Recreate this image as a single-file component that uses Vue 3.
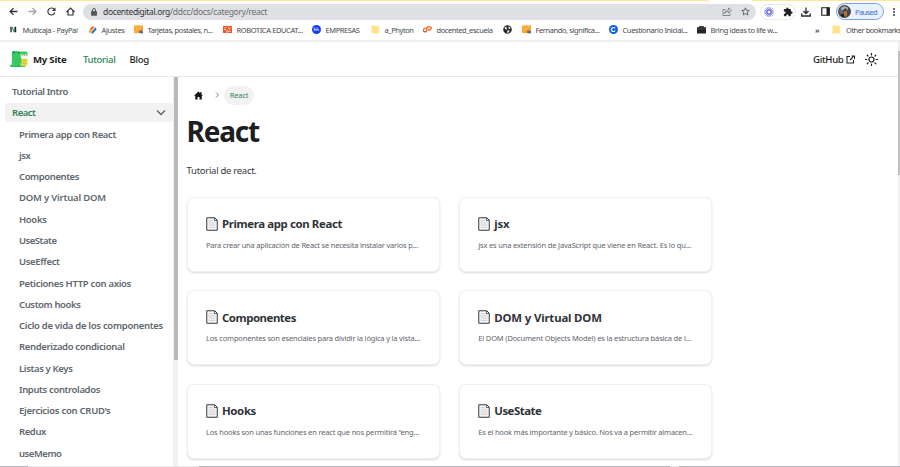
<script setup>
// Tunes the tracking of a label so that it takes the given width.
const vFit = {
  mounted(el, { value }) {
    const natural = el.getBoundingClientRect().width
    el.style.letterSpacing = (value - natural) / el.textContent.length + 'px'
  },
}

const bookmarks = [
  { icon: 'n', label: 'Multicaja - PayPal', text: 55, slot: 79 },
  { icon: 'pen', label: 'Ajustes', text: 23, slot: 46 },
  { icon: 'card', label: 'Tarjetas, postales, n...', text: 65, slot: 89 },
  { icon: 'robot', label: 'ROBOTICA EDUCAT...', text: 66, slot: 89 },
  { icon: 'wave', label: 'EMPRESAS', text: 34, slot: 59 },
  { icon: 'folder', label: 'a_Phyton', text: 29, slot: 52 },
  { icon: 'cp', label: 'docented_escuela', text: 56, slot: 80 },
  { icon: 'globe', label: '', text: 0, slot: 19 },
  { icon: 'card', label: 'Fernando, significa...', text: 64, slot: 87 },
  { icon: 'c', label: 'Cuestionario Inicial...', text: 65, slot: 88 },
  { icon: 'case', label: 'Bring ideas to life w...', text: 67, slot: 118 },
]

const links = [
  ['Primera app con React', 97],
  ['jsx', 11.5],
  ['Componentes', 60],
  ['DOM y Virtual DOM', 87],
  ['Hooks', 27.5],
  ['UseState', 37.5],
  ['UseEffect', 40.5],
  ['Peticiones HTTP con axios', 112],
  ['Custom hooks', 61.5],
  ['Ciclo de vida de los componentes', 144],
  ['Renderizado condicional', 105.5],
  ['Listas y Keys', 53.5],
  ['Inputs controlados', 81],
  ["Ejercicios con CRUD’s", 91.5],
  ['Redux', 27],
  ['useMemo', 42.5],
]

const cards = [
  { title: 'Primera app con React', tw: 120, desc: 'Para crear una aplicación de React se necesita instalar varios p...', dw: 212 },
  { title: 'jsx', tw: 15, desc: 'jsx es una extensión de JavaScript que viene en React. Es lo qu...', dw: 213 },
  { title: 'Componentes', tw: 74, desc: 'Los componentes son esenciales para dividir la lógica y la vista...', dw: 214 },
  { title: 'DOM y Virtual DOM', tw: 107.5, desc: 'El DOM (Document Objects Model) es la estructura básica de l...', dw: 213 },
  { title: 'Hooks', tw: 34, desc: 'Los hooks son unas funciones en react que nos permitirá “eng...', dw: 213 },
  { title: 'UseState', tw: 47, desc: 'Es el hook más importante y básico. Nos va a permitir almacen...', dw: 214 },
]
</script>

<template>
  <div class="window">
    <div class="tabstrip"><i></i></div>
    <div class="toolbar">
      <div class="nav-icons">
        <svg width="9" height="9" viewBox="0 0 16 16" class="line"><path d="M15 8H2M8 2 2 8l6 6" /></svg>
        <svg width="9" height="9" viewBox="0 0 16 16" class="line dim"><path d="M1 8h13M8 2l6 6-6 6" /></svg>
        <svg width="9" height="9" viewBox="0 0 18 18" class="line"><path d="M15.500 11A7 7 0 1 1 14 4.300L16 7" /><path d="M17 1v7h-7z" fill="#333" stroke="none" /></svg>
        <svg width="9" height="9" viewBox="0 0 18 18" class="line"><path d="M1 10 9 2l8 8M4 8v8h10V8" /></svg>
      </div>
      <div class="address">
        <svg width="6" height="8" viewBox="0 0 12 16"><path d="M3 7V4a3 3 0 0 1 6 0v3" fill="none" stroke="#55585c" stroke-width="2" /><rect y="6" width="12" height="9.500" rx="1.500" fill="#55585c" /></svg>
        <span class="url"><span v-fit="67"><b>docentedigital.org</b></span><span v-fit="97" class="path">/ddcc/docs/category/react</span></span>
        <svg width="10" height="9" viewBox="0 0 20 18" class="thin"><path d="M7 5H2v12h14v-4M5 13c1-5 5-7 8-7V2l6 5-6 5V9q-5 0-8 4z" /></svg>
        <svg width="9" height="9" viewBox="0 0 20 20" class="star"><path d="m10 2 2.400 5.300 5.800.6-4.300 3.900 1.200 5.700-5.100-2.900-5.100 2.900 1.200-5.700L1.800 7.900l5.800-.6z" /></svg>
      </div>
      <div class="extensions">
        <svg width="10" height="10" viewBox="0 0 20 20"><path d="M10 0v20M0 10h20M3 3l14 14M17 3 3 17M6.200.8l7.600 18.400M13.800.8 6.200 19.200M.8 6.200l18.400 7.600M.8 13.800l18.400-7.600" stroke="#625bf0" stroke-width="1.500" /><circle cx="10" cy="10" r="5" fill="#625bf0" /><circle cx="10" cy="10" r="3" fill="#fff" /></svg>
        <svg width="10" height="10" viewBox="0 0 24 24"><path fill="#202124" d="M20.500 11H19V7a2 2 0 0 0-2-2h-4V3.500a2.500 2.500 0 0 0-5 0V5H4a2 2 0 0 0-2 2v3.800h1.500a2.700 2.700 0 0 1 0 5.400H2V20a2 2 0 0 0 2 2h3.800v-1.500a2.700 2.700 0 0 1 5.400 0V22H17a2 2 0 0 0 2-2v-4h1.500a2.500 2.500 0 0 0 0-5z" /></svg>
      </div>
      <svg class="download" width="10" height="10" viewBox="0 0 20 20"><path d="M10 1v11M5 8l5 5 5-5M1.500 13v5h17v-5" fill="none" stroke="#28292c" stroke-width="2.600" /></svg>
      <svg class="panel" width="9" height="9" viewBox="0 0 18 18"><path d="M1.500 1.500h15v15h-15z" fill="none" stroke="#222" stroke-width="2.400" /><path d="M11 1h6v16h-6z" fill="#222" /></svg>
      <div class="profile">
        <svg width="13" height="13" viewBox="0 0 14 14"><circle cx="7" cy="7" r="7" fill="#484545" /><path d="M3 3 7 1l4 2-1 3-4-1-3 2z" fill="#a9adb3" /><path d="M1 5.500 5 5l1 4-4 1z" fill="#656b79" /><path d="M7 4.500 9 6l1 4-1 3-3-1z" fill="#b17038" /><circle cx="8" cy="5" r="1.300" fill="#252326" /><path d="M3 10h3l1 3-3-.5z" fill="#18191e" /></svg>
        <span v-fit="22">Paused</span>
      </div>
      <div class="dots"><i></i><i></i><i></i></div>
    </div>

    <div class="bookmarks">
      <div v-for="(b, i) in bookmarks" :key="i" class="bookmark" :style="{ width: b.slot + 'px' }">
        <svg width="9" height="9" viewBox="0 0 20 20">
          <g v-if="b.icon === 'n'"><path d="M3 16V4l3 0v12z" fill="#222" /><path d="M5 4h3l5 12h-3z" fill="#25a95d" /><path d="M12 4h4v12h-4z" fill="#222" /></g>
          <g v-else-if="b.icon === 'pen'"><path d="M3 9 11 2l4 3-8 8z" fill="#f37532" /><path d="m2 13 4-3 3 3-4 4-3 1z" fill="#fba61b" /><path d="m8 15 9-10 2 5-8 9H7z" fill="#2679bd" /></g>
          <g v-else-if="b.icon === 'card'"><path d="M0 1h20v17H0z" fill="#f6a530" /><path d="m2 3 7 7 8-7M1 16l7-7" fill="none" stroke="#ffc95a" stroke-width="2" /><path d="M11 12h6v6h-6z" fill="#dd5546" /><circle cx="17" cy="16" r="3" fill="#35749b" /></g>
          <g v-else-if="b.icon === 'robot'"><path d="M0 2h20v16H10V11H8v7H0z" fill="#ef5327" /><path d="M2 6h6M2 10h5M12 5l2 5 4-5M11 14h7" fill="none" stroke="#fff" stroke-width="1.500" /></g>
          <g v-else-if="b.icon === 'wave'"><circle cx="10" cy="10" r="10" fill="#173bfb" /><path d="M5 5v8M5 10q3-3 4 3M11 5v8M11 10q3-3 4 3" fill="none" stroke="#fff" stroke-width="1.500" /></g>
          <g v-else-if="b.icon === 'folder'"><path d="M1 1h8l1 1h8v17H1z" fill="#ffe38a" /></g>
          <g v-else-if="b.icon === 'cp'" fill="none" stroke="#f46427" stroke-width="3"><path d="M9 7H5q-3 0-4 4t3 4h3L10 4h5q4 0 3 4t-5 3h-2" /></g>
          <g v-else-if="b.icon === 'globe'"><circle cx="10" cy="10" r="9.500" fill="#252629" /><path d="M3 6q5-4 5 0t3 2q-2 3-5 2zM13 3l4 4-3 2-2-2zM10 12h5l-3 5h-3z" fill="#fff" /></g>
          <g v-else-if="b.icon === 'c'"><circle cx="10" cy="10" r="10" fill="#105fe0" /><path d="M13.500 7.500a4.500 4.500 0 1 0 0 5" fill="none" stroke="#fff" stroke-width="2.600" /></g>
          <g v-else><path d="M5 5V2h10v3h5v14H0V5z" fill="#292525" /><path d="M1 9h18" stroke="#777" /><path d="M8 4h4" stroke="#aaa" /></g>
        </svg>
        <span v-if="b.label" v-fit="b.text">{{ b.label }}</span>
      </div>
      <span class="more">»</span>
      <i class="divider"></i>
      <svg class="other-icon" width="9" height="9" viewBox="0 0 20 20"><path d="M1 1h8l1 1h8v17H1z" fill="#ffe38a" /></svg>
      <span v-fit="55">Other bookmarks</span>
    </div>

    <div class="page">
      <div class="site">
        <header class="navbar">
          <svg class="logo" width="19" height="18" viewBox="0 0 38 36">
            <path d="M4 3q2-3 5 0 3-3 6 0h17q3 0 3 4v5H22v6h12v9l-4 7H2v-5h3q-3-4-1-8z" fill="#35c963" />
            <path d="M0 30h25v4H3q-3 0-3-3z" fill="#2fc45b" />
            <path d="M20 9h15v4H20z" fill="#d7f3bd" /><path d="M20 11h15" stroke="#44915a" stroke-dasharray="2 2" />
            <path d="M23 17h12v9q0 6-6 6h-6l-4-5h4z" fill="#e6d545" /><path d="M27 21h5M26 27h4" stroke="#b0c641" stroke-width="2" />
            <circle cx="8" cy="5" r="1.500" fill="#164d27" /><circle cx="17" cy="5" r="1.500" fill="#164d27" />
          </svg>
          <b class="brand"><span v-fit="33.5">My Site</span></b>
          <a class="tutorial"><span v-fit="32.5">Tutorial</span></a>
          <a class="blog"><span v-fit="19.500">Blog</span></a>
          <a class="github"><span v-fit="30.500">GitHub</span></a>
          <svg class="external" width="9" height="9" viewBox="0 0 18 18"><path d="M8 3H2v13h13v-6M11 2h6v6M16 2 8 10" fill="none" stroke="#26282b" stroke-width="2.200" /></svg>
          <svg class="sun" width="13" height="13" viewBox="0 0 26 26" fill="none" stroke="#202225" stroke-width="2.400" stroke-linecap="round"><circle cx="13" cy="13" r="5" /><path d="M13 1v3M13 22v3M1 13h3M22 13h3M4.500 4.500l1.500 1.500M20 20l1.500 1.500M21.500 4.500 20 6M6 20l-1.500 1.500" /></svg>
        </header>

        <div class="body">
          <aside>
            <div class="intro"><span v-fit="56">Tutorial Intro</span></div>
            <div class="category"><span v-fit="23.5">React</span>
              <svg width="10" height="7" viewBox="0 0 20 14"><path d="m2 3 8 8 8-8" fill="none" stroke="#606770" stroke-width="3" /></svg>
            </div>
            <div v-for="l in links" :key="l[0]" class="link"><span v-fit="l[1]">{{ l[0] }}</span></div>
          </aside>
          <div class="side-track"><i></i></div>
          <main>
            <div class="crumbs">
              <svg width="9" height="9" viewBox="0 0 18 18"><path d="M9 1 0 9.500h2.500V17H7v-5h4v5h4.500V9.500H18L15 6.500V2h-2.500v2.300z" fill="#111419" /></svg>
              <svg width="4" height="6" viewBox="0 0 8 12"><path d="m2 1 5 5-5 5" fill="none" stroke="#777" stroke-width="1.800" /></svg>
              <div class="crumb"><span v-fit="18.500">React</span></div>
            </div>
            <h1><span v-fit="72.500">React</span></h1>
            <p class="lead"><span v-fit="70">Tutorial de react.</span></p>
            <div class="grid">
              <article v-for="c in cards" :key="c.title" class="card">
                <h2>
                  <svg width="12" height="14" viewBox="0 0 24 28"><path d="M1.500 1.500h16l5 5v20h-21z" fill="#f7f7f7" stroke="#34373b" stroke-width="2" /><path d="M17 2v5h5" fill="none" stroke="#34373b" stroke-width="1.500" /><path d="M5 7h10M5 10.500h14M5 14h14M5 17.500h14M5 21h14" stroke="#c9cbce" stroke-width="1.500" /></svg>
                  <span v-fit="c.tw">{{ c.title }}</span>
                </h2>
                <p><span v-fit="c.dw">{{ c.desc }}</span></p>
              </article>
            </div>
          </main>
        </div>
      </div>
      <div class="page-track"><i></i></div>
    </div>
    <div class="bottom"><i class="b1"></i><i class="b2"></i><i class="b3"></i></div>
  </div>
</template>

<style>
body { margin: 0; background: #fff; overflow: hidden; }
</style>

<style scoped>
* { box-sizing: border-box; }
.window { width: 900px; height: 467px; display: flex; flex-direction: column; overflow: hidden; background: #fff; font-family: "Noto Sans", "Open Sans", sans-serif; color: #1c1e21; white-space: nowrap; }
span { display: inline-block; }
svg { flex: none; display: block; }
.tabstrip { height: 1px; flex: none; background: #ffe694; display: flex; justify-content: flex-end; }
.tabstrip i { width: 43px; margin-right: 148px; background: #fff; }
.toolbar { height: 21px; flex: none; display: flex; align-items: center; }
.nav-icons { width: 83px; display: flex; align-items: center; padding-left: 9px; gap: 10px; }
.line { fill: none; stroke: #333; stroke-width: 2.3; }
.dim { stroke: #a2a2a2; }
.address { width: 673px; height: 16px; border-radius: 8px; background: #dfe0e3; display: flex; align-items: center; padding: 0 6px 0 8px; }
.url { flex: 1; margin-left: 6px; display: flex; font-size: 8.5px; line-height: 14px; color: #333538; }
.url b { font-weight: 400; }
.path { color: #6b6d70; }
.thin { fill: none; stroke: #696b6e; stroke-width: 1.5; margin-right: 9px; }
.star { fill: none; stroke: #45474a; stroke-width: 1.8; }
.extensions { width: 36px; height: 16px; margin-left: 4px; border: 1px solid #ebebed; border-radius: 8px; display: flex; align-items: center; justify-content: center; gap: 9px; }
.download { margin-left: 5px; }
.panel { margin-left: 10px; }
.profile { width: 48px; height: 17px; margin-left: 6px; border: 1px solid #78a4e5; border-radius: 9px; background: #e9f1fd; display: flex; align-items: center; gap: 4px; padding-left: 1px; font-size: 7.6px; color: #3d74cd; }
.dots { margin-left: 9px; display: flex; flex-direction: column; gap: 1px; }
.dots i { width: 2px; height: 2px; background: #37383a; border-radius: 1px; }
.bookmarks { height: 20px; flex: none; display: flex; align-items: center; padding: 0 0 3px 9px; font-size: 7.5px; color: #46494d; border-bottom: 2px solid #eeeeef; }
.bookmark { flex: none; display: flex; align-items: center; gap: 4.5px; }
.more { width: 11px; flex: none; font-weight: 700; }
.divider { width: 1px; height: 9px; background: #ccc; margin-right: 6px; }
.other-icon { margin-right: 5px; }
.page { display: flex; height: 424px; flex: none; }
.site { width: 898px; }
.navbar { height: 35px; display: flex; align-items: center; padding: 0 20px 0 10px; font-size: 9.6px; border-bottom: 1px solid #e9e9eb; }
.brand { margin-left: 4px; font-weight: 700; }
.tutorial { margin-left: 16.5px; color: #2e8555; font-weight: 500; }
.blog { margin-left: 14px; font-weight: 500; }
.github { margin-left: auto; font-weight: 500; }
.external { margin-left: 2.5px; }
.sun { margin-left: 10px; }
.body { display: flex; height: 389px; overflow: hidden; }
aside { width: 173px; padding: 4px 0 0 5px; font-size: 9.5px; font-weight: 600; color: #606770; }
aside > div { height: 21.28px; display: flex; align-items: center; }
.intro { padding-left: 7px; }
aside > .category { height: 19px; margin: 0.5px 0 1.8px; padding: 0 7.5px 0 7px; justify-content: space-between; background: #f2f2f2; border-radius: 2px; color: #2e8555; }
.link { padding-left: 14px; }
.side-track { width: 5px; background: #f1f1f1; }
.side-track i { display: block; width: 4px; height: 283px; margin-left: 1px; background: #b9b9b9; }
main { padding: 9px 0 0 8.6px; }
.crumbs { height: 18px; display: flex; align-items: center; padding-left: 7px; }
.crumbs svg:nth-child(2) { margin-left: 12.5px; }
.crumb { width: 30px; height: 19px; margin-left: 5px; border-radius: 10px; background: #f2f2f2; display: flex; align-items: center; justify-content: center; font-size: 7.5px; color: #2e8555; }
h1 { margin: 8px 0 0; height: 38px; line-height: 38px; font-size: 28px; font-weight: 700; }
.lead { margin: 11px 0 0; height: 20px; line-height: 20px; font-size: 9.5px; color: #36383b; }
.grid { display: grid; grid-template-columns: 253.6px 253.6px; gap: 18.7px; margin-top: 15.6px; }
.card { height: 75px; padding: 18px 18.4px; border-radius: 7px; background: #fff; border: 1px solid #f0f0f2; box-shadow: 0 1px 2px rgba(0, 0, 0, .15); }
.card h2 { margin: 0; height: 16px; display: flex; align-items: center; gap: 4px; font-size: 11.4px; font-weight: 700; color: #303338; }
.card p { margin: 7px 0 0; height: 13px; line-height: 13px; font-size: 7.5px; color: #5f646b; }
.page-track { width: 2px; background: #f0f0f0; padding-top: 9px; }
.page-track i { display: block; height: 124px; background: #bfbfbf; }
.bottom { height: 1px; flex: none; display: flex; background: #e9e9e9; }
.bottom i { height: 1px; background: #b8b9bc; }
.b1 { width: 28px; }
.b2 { width: 471px; margin-left: 171px; }
.b3 { width: 221px; margin-left: 9px; }
</style>
